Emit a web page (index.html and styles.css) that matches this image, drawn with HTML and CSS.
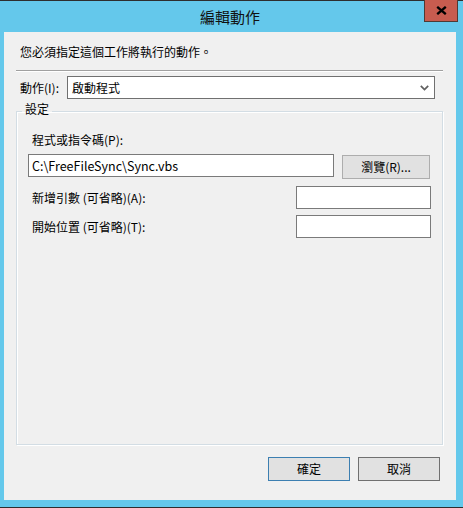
FILE: index.html
```html
<!DOCTYPE html>
<html lang="zh-Hant">
<head>
<meta charset="utf-8">
<title>編輯動作</title>
<link rel="stylesheet" href="styles.css">
</head>
<body>
<div class="window">
  <div class="titlebar">
    <span class="title">編輯動作</span>
    <button class="close" aria-label="關閉">
      <svg width="11" height="9" viewBox="0 0 11 9"><path d="M1.2 0.8 L9.8 8.2 M9.8 0.8 L1.2 8.2" stroke="#000" stroke-width="2.3" fill="none"/></svg>
    </button>
  </div>
  <div class="client">
    <p class="intro">您必須指定這個工作將執行的動作。</p>
    <div class="sep"></div>
    <div class="action-row">
      <span class="action-label">動作(I):</span>
      <div class="combo">
        <span class="combo-text">啟動程式</span>
        <svg class="chev" width="9" height="6" viewBox="0 0 9 6"><path d="M0.8 0.8 L4.5 4.6 L8.2 0.8" stroke="#606060" stroke-width="1.7" fill="none"/></svg>
      </div>
    </div>
    <fieldset class="group">
      <legend class="group-title">設定</legend>
      <div class="field-label">程式或指令碼(P):</div>
      <div class="path-row">
        <div class="textbox wide">C:\FreeFileSync\Sync.vbs</div>
        <button class="btn browse">瀏覽(R)...</button>
      </div>
      <div class="opt-row first">
        <span class="field-label inline">新增引數 (可省略)(A):</span>
        <div class="textbox narrow"></div>
      </div>
      <div class="opt-row">
        <span class="field-label inline">開始位置 (可省略)(T):</span>
        <div class="textbox narrow"></div>
      </div>
    </fieldset>
    <div class="footer">
      <button class="btn dlg default">確定</button>
      <button class="btn dlg cancel">取消</button>
    </div>
  </div>
</div>
</body>
</html>
```
FILE: styles.css
```css
html, body {
  margin: 0;
  padding: 0;
}
body {
  width: 463px;
  height: 508px;
  overflow: hidden;
  font-family: "Noto Sans CJK TC", "Noto Sans", sans-serif;
  font-size: 12px;
  color: #000;
}
.window {
  box-sizing: border-box;
  width: 463px;
  height: 508px;
  background: #64c8eb;
  border-top: 1px solid #2e2e2e;
  border-bottom: 1px solid #2e2e2e;
  padding: 0 7px 7px 4px;
  display: flex;
  flex-direction: column;
}
.titlebar {
  position: relative;
  height: 31px;
  flex: none;
  display: flex;
  align-items: center;
  justify-content: center;
}
.title {
  font-size: 15px;
  line-height: 20px;
  color: #111;
  margin-top: 1px;
}
.close {
  position: absolute;
  top: -1px;
  right: -2px;
  width: 34px;
  height: 22px;
  box-sizing: border-box;
  margin: 0;
  padding: 0;
  background: #c75c4f;
  border: 1px solid #4f3a34;
  border-top: none;
  display: flex;
  align-items: center;
  justify-content: center;
}
.client {
  flex: 1;
  background: #f0f0f0;
  padding: 0 13px 0 12px;
  display: flex;
  flex-direction: column;
  min-height: 0;
}
.intro {
  margin: 12px 0 0 4px;
  line-height: 16px;
}
.sep {
  margin-top: 10px;
  height: 0;
  border-top: 1px solid #a0a0a0;
  border-bottom: 1px solid #fff;
}
.action-row {
  margin-top: 4px;
  height: 23px;
  display: flex;
  align-items: center;
}
.action-label {
  box-sizing: border-box;
  width: 51px;
  padding-left: 4px;
  line-height: 16px;
}
.combo {
  box-sizing: border-box;
  width: 368px;
  height: 23px;
  background: #fff;
  border: 1px solid #707070;
  display: flex;
  align-items: center;
  justify-content: space-between;
  padding: 0 5px 0 4px;
}
.chev {
  display: block;
}
.group {
  flex: 1;
  min-height: 0;
  margin: 2px 0 0;
  padding: 0 11px;
  border: 1px solid #d3dde4;
  box-shadow: inset 1px 1px 0 #fff, 1px 1px 0 #fff;
  min-width: 0;
}
.group-title {
  padding: 0 3px 4px;
  margin-left: -6px;
  line-height: 16px;
}
.field-label {
  padding-left: 4px;
  line-height: 16px;
  margin-top: 11px;
}
.field-label.inline {
  margin-top: 0;
}
.path-row {
  margin-top: 6px;
  display: flex;
  align-items: flex-start;
}
.textbox {
  box-sizing: border-box;
  height: 23px;
  background: #fff;
  border: 1px solid #7a7a7a;
  padding: 0 3px;
  line-height: 21px;
  font-size: 12.5px;
  white-space: nowrap;
}
.textbox.wide {
  width: 306px;
}
.textbox.narrow {
  width: 135px;
}
.btn {
  box-sizing: border-box;
  margin: 0;
  padding: 0;
  font-family: inherit;
  font-size: 12px;
  color: #000;
  background: #e1e1e1;
  border: 1px solid #adadad;
  height: 24px;
  line-height: 16px;
}
.browse {
  width: 88px;
  margin: 1px 0 0 8px;
}
.opt-row {
  display: flex;
  align-items: center;
  justify-content: space-between;
  margin-top: 6px;
}
.opt-row.first {
  margin-top: 7px;
}
.footer {
  flex: none;
  display: flex;
  justify-content: flex-end;
  gap: 8px;
  padding-right: 3px;
  margin: 12px 0 19px;
}
.dlg {
  width: 82px;
}
.default {
  border-color: #3c7fb1;
}
.cancel {
  border-color: #707070;
}
```
